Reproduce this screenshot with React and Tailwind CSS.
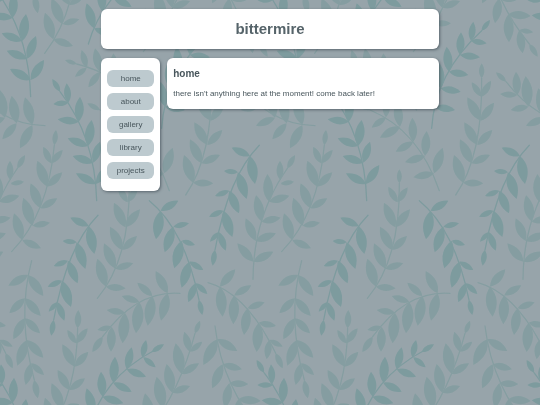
const DARK = '#6f9698';
const LIGHT = '#7b9a9c';

// Each sprig: stem path, then leaves as [node x, node y, tip x, tip y]; the bud is the last leaf.
const sprigs = [
  { c: DARK, d: 'M180 275Q285 410 290 602', l: [[205,308,160,312],[205,308,200,250],[236,365,173,358],[236,365,240,290],[264,438,203,415],[264,438,275,360],[280,488,218,468],[280,488,300,425],[288,552,228,520],[288,552,328,495],[180,275,157,237]] },
  { c: DARK, d: 'M-18 1118Q87 1253 92 1445', l: [[9,1155,-38,1155],[7,1151,3,1093],[38,1208,-25,1201],[38,1208,42,1133],[66,1278,5,1255],[67,1278,78,1197],[82,1331,20,1307],[82,1331,108,1263],[92,1395,30,1362],[92,1395,132,1335],[-18,1118,-40,1080]] },
  { c: LIGHT, d: 'M163 435Q145 640 35 755', l: [[153,490,188,450],[153,490,130,440],[142,560,187,517],[142,560,112,482],[122,625,172,595],[122,625,92,550],[98,677,150,668],[98,677,70,593],[67,720,123,745],[67,720,42,640],[163,435,168,390]] },
  { c: LIGHT, d: 'M52 505Q-50 650 -51 838', l: [[32,552,72,545],[30,540,30,482],[-3,605,58,587],[-3,605,-8,522],[-25,665,32,653],[-25,665,-42,585],[-43,723,18,700],[-43,723,-73,655],[-50,785,10,755],[-50,785,-98,730],[52,505,75,465]] },
  { c: LIGHT, d: 'M635 235Q638 470 557 585', l: [[634,290,663,242],[634,290,605,247],[632,362,672,308],[632,362,592,292],[622,435,667,390],[622,435,583,367],[605,490,660,465],[605,490,570,418],[580,548,640,550],[580,548,552,465],[635,235,635,190]] },
  { c: LIGHT, d: 'M388 550Q390 780 292 895', l: [[382,607,413,562],[382,607,355,560],[376,682,420,628],[376,682,342,608],[367,750,411,708],[367,750,330,680],[346,806,400,790],[346,806,312,730],[318,860,377,865],[318,860,292,776],[388,550,388,508]] },
  { c: DARK, d: 'M778 436Q685 530 645 750', l: [[750,468,695,443],[750,468,765,552],[714,517,672,513],[714,517,740,597],[688,572,645,588],[688,572,717,640],[670,632,627,650],[670,632,697,711],[657,697,630,725],[657,697,677,752],[645,750,638,797]] },
  { c: DARK, d: 'M294 646Q201 740 161 960', l: [[266,678,211,653],[266,678,283,762],[230,727,188,723],[230,727,256,807],[204,782,161,798],[204,782,233,850],[186,842,143,860],[186,842,213,921],[173,907,146,935],[173,907,193,962],[161,960,154,1007]] },
  { c: DARK, d: 'M448 602Q555 690 597 900', l: [[482,632,468,718],[482,632,535,602],[520,680,494,757],[520,680,567,670],[545,722,523,805],[545,722,585,735],[568,785,545,863],[568,785,610,810],[587,850,565,907],[587,850,622,882],[597,900,607,945]] },
  { c: LIGHT, d: 'M95 782Q50 950 103 1140', l: [[84,825,25,857],[84,825,130,888],[75,895,28,940],[75,895,122,948],[74,955,40,1018],[74,955,120,1000],[80,1020,52,1097],[80,1020,130,1073],[93,1090,77,1155],[93,1090,132,1125],[103,1140,113,1195]] },
  { c: LIGHT, d: 'M540 880Q410 870 308 1010', l: [[503,880,467,813],[503,880,483,962],[457,888,412,848],[457,888,443,977],[418,906,365,888],[418,906,408,1000],[375,938,320,930],[375,938,368,1030],[335,980,292,990],[335,980,333,1055],[308,1010,277,1056]] },
  { c: LIGHT, d: 'M624 848Q740 880 827 1060', l: [[660,860,706,808],[660,860,668,950],[703,886,754,856],[703,886,700,973],[743,925,794,907],[743,925,732,1005],[776,968,828,978],[776,968,770,1056],[808,1020,848,1040],[808,1020,800,1078],[827,1060,848,1105]] },
  { c: LIGHT, d: 'M233 985Q230 1190 134 1315', l: [[228,1030,263,985],[228,1030,202,990],[224,1100,265,1055],[224,1100,187,1033],[208,1170,255,1135],[208,1170,173,1110],[188,1227,238,1213],[188,1227,155,1150],[160,1273,219,1293],[160,1273,135,1193],[233,985,235,930]] },
  { c: DARK, d: 'M465 1050Q310 1130 265 1287', l: [[430,1072,467,1102],[427,1072,438,1020],[380,1108,438,1130],[380,1108,395,1042],[340,1148,395,1175],[340,1148,345,1070],[308,1190,370,1210],[308,1190,303,1115],[282,1240,335,1262],[282,1240,260,1165],[455,1056,492,1033]] },
  { c: DARK, d: 'M635 92Q495 220 485 385', l: [[603,122,650,130],[603,122,610,65],[570,165,630,172],[570,165,573,97],[537,215,595,225],[537,215,530,140],[512,265,572,275],[512,265,505,185],[495,320,555,330],[495,320,482,245],[635,92,660,60]] },
  { c: LIGHT, d: 'M585 1000Q535 1190 430 1310', l: [[570,1055,607,1025],[570,1055,553,995],[545,1122,597,1090],[545,1122,527,1030],[517,1178,570,1158],[517,1178,500,1092],[490,1225,543,1225],[490,1225,470,1130],[455,1275,505,1290],[455,1275,435,1180],[585,1000,600,962]] },
  { c: LIGHT, d: 'M645 978Q665 1150 778 1287', l: [[652,1018,610,1095],[652,1018,712,1053],[668,1093,637,1165],[668,1093,726,1108],[688,1150,675,1225],[688,1150,745,1152],[715,1198,717,1282],[715,1198,782,1203],[748,1245,758,1315],[748,1245,790,1252],[778,1287,803,1325]] },
  { c: LIGHT, d: 'M300 330Q445 390 508 572', l: [[492,520,430,532],[492,520,518,443],[465,468,405,487],[465,468,470,393],[430,425,377,455],[430,425,427,353],[390,380,330,413],[390,380,380,305],[348,352,305,383],[348,352,350,290],[300,330,262,310]] },
  { c: LIGHT, d: 'M-102 245Q0 375 135 377', l: [[97,375,60,445],[97,375,75,292],[50,370,7,418],[50,370,35,287],[15,353,-42,377],[15,353,-5,265],[-35,320,-88,330],[-35,320,-43,228],[-68,285,-120,282],[-68,285,-72,215],[-102,245,-132,217]] },
  { c: LIGHT, d: 'M230 192Q350 220 440 330', l: [[260,203,225,230],[260,203,245,150],[300,216,265,262],[300,216,285,145],[345,240,320,300],[345,240,340,160],[230,192,195,180]] },
];

function leafPath([x, y, tx, ty]) {
  const dx = tx - x;
  const dy = ty - y;
  const w = 0.24;
  const ax = x + dx * 0.3;
  const ay = y + dy * 0.3;
  const bx = x + dx * 0.65;
  const by = y + dy * 0.65;
  return `M${x} ${y}C${ax - dy * w} ${ay + dx * w} ${bx - dy * w} ${by + dx * w} ${tx} ${ty}C${bx + dy * w} ${by - dx * w} ${ax + dy * w} ${ay - dx * w} ${x} ${y}Z`;
}

function Foliage() {
  return (
    <svg className="fixed inset-0 -z-10 h-full w-full" aria-hidden="true">
      <defs>
        <g id="sprigs">
          {sprigs.map((s) => (
            <g key={s.d} opacity="0.65">
              <path d={s.d} fill="none" stroke={s.c} strokeWidth="4" strokeLinecap="round" />
              {s.l.map((leaf) => (
                <path key={leaf.join()} d={leafPath(leaf)} fill={s.c} />
              ))}
            </g>
          ))}
        </g>
        <pattern id="foliage" width="270" height="385" patternUnits="userSpaceOnUse">
          <g transform="scale(0.33333)">
            {[-810, 0, 810].map((x) =>
              [-1155, 0].map((y) => <use key={`${x},${y}`} href="#sprigs" x={x} y={y} />)
            )}
          </g>
        </pattern>
      </defs>
      <rect width="100%" height="100%" fill="#97a4aa" />
      <rect width="100%" height="100%" fill="url(#foliage)" />
    </svg>
  );
}

const card = 'rounded-md bg-white shadow-[1px_1px_3px_rgba(50,60,70,0.6)]';
const pages = ['home', 'about', 'gallery', 'library', 'projects'];

export default function App() {
  return (
    <div className="relative isolate min-h-screen font-['Liberation_Sans',Arial,sans-serif] text-[#48565c]">
      <Foliage />
      <div className="mx-auto flex w-5/8 flex-col gap-[9px] py-[9px]">
        <header className={`${card} py-2 text-center`}>
          <h1 className="text-[15px] leading-6 font-bold text-[#56646a]">bittermire</h1>
        </header>
        <div className="flex items-start gap-[7px]">
          <nav className={`${card} flex w-[59px] shrink-0 flex-col gap-1.5 px-1.5 py-3`}>
            {pages.map((page) => (
              <a key={page} href={`#${page}`} className="rounded-md bg-[#bdcacf] text-center text-[8px] leading-[17px]">
                {page}
              </a>
            ))}
          </nav>
          <main className={`${card} flex-1 px-1.5 py-2`}>
            <h2 className="text-[10px] leading-4 font-bold">home</h2>
            <p className="mt-1 text-[8px] leading-[15px]">there isn't anything here at the moment! come back later!</p>
          </main>
        </div>
      </div>
    </div>
  );
}
